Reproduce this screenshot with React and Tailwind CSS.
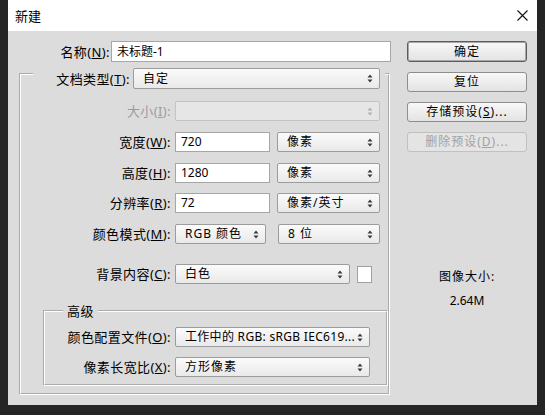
import React from 'react';

function Arrows({ disabled }) {
  return (
    <svg width="6" height="9" viewBox="0 0 6 9" className="shrink-0">
      <path d="M3 0.5L5.5 3.5H0.5Z M0.5 5.5H5.5L3 8.5Z" fill={disabled ? '#b0b0b0' : '#3a3a3a'} />
    </svg>
  );
}

function Select({ w, h = 'h-[20px]', disabled, track = 'tracking-[1px]', children }) {
  return (
    <div
      className={`${w} ${h} shrink-0 flex items-center justify-between pl-[9px] pr-[6px] rounded-[2px] border ${
        disabled
          ? 'border-[#c2c2c2] bg-[#e6e6e6] text-[#a0a0a0]'
          : 'border-[#9c9c9c] bg-linear-to-b from-[#fbfbfb] to-[#e9e9e9] text-black'
      }`}
    >
      <span className={`whitespace-nowrap leading-[16px] ${track}`}>{children}</span>
      <Arrows disabled={disabled} />
    </div>
  );
}

function Input({ w, h = 'h-[20px]', children }) {
  return (
    <div className={`${w} ${h} shrink-0 flex items-center pl-[5px] bg-white border border-[#a6a6a6] leading-[16px]`}>
      {children}
    </div>
  );
}

function Label({ w, disabled, children }) {
  return (
    <span
      className={`${w} shrink-0 text-right whitespace-nowrap text-[13px] leading-[16px] tracking-[0.4px] ${
        disabled ? 'text-[#9c9c9c]' : 'text-black'
      }`}
    >
      {children}
    </span>
  );
}

function Button({ h = 'h-[20px]', primary, disabled, children }) {
  let tone = 'border-[#8e8e8e] bg-linear-to-b from-[#f8f8f8] to-[#e3e3e3] text-black';
  if (primary) tone = 'border-[#5c5c5c] shadow-[inset_0_0_0_1px_#a8a8a8] bg-linear-to-b from-[#f8f8f8] to-[#e3e3e3] text-black';
  if (disabled) tone = 'border-[#c0c0c0] bg-[#e4e4e4] text-[#a2a2a2]';
  return (
    <div className={`w-[120px] ${h} flex items-center justify-center rounded-[3px] border tracking-[1px] leading-[16px] ${tone}`}>
      {children}
    </div>
  );
}

export default function App() {
  return (
    <div className="w-[545px] h-[415px] bg-[#252525] px-[8px] pb-[10px] flex flex-col text-[12px] leading-none [font-family:'Noto_Sans','Noto_Sans_CJK_SC',sans-serif]">
      {/* title bar */}
      <div className="h-[31px] shrink-0 bg-white flex items-center justify-between pl-[7px] pr-[9px]">
        <span className="text-[13px] leading-[16px] text-black">新建</span>
        <svg width="11" height="11" viewBox="0 0 11 11">
          <path d="M0.5 0.5L10.5 10.5M10.5 0.5L0.5 10.5" stroke="#111" strokeWidth="1.1" />
        </svg>
      </div>

      {/* body */}
      <div className="flex-1 bg-[#dcdcdc] flex">
        {/* left column */}
        <div className="w-[391px] flex flex-col">
          <div className="mt-[10px] h-[21px] flex items-center">
            <Label w="w-[102px]">名称(<u>N</u>):</Label>
            <div className="ml-[1px]">
              <Input w="w-[280px]" h="h-[21px]">未标题-1</Input>
            </div>
          </div>

          <fieldset className="mt-[6px] ml-[11px] w-[371px] border-2 border-white [border-style:groove] p-0 pb-[7px]">
            <legend className="ml-[12px] pr-[5px] h-[12px] p-0">
              <div className="h-[21px] flex items-center">
                <Label w="w-[97px]">文档类型(<u>T</u>):</Label>
                <div className="ml-[3px]">
                  <Select w="w-[247px]" h="h-[21px]">自定</Select>
                </div>
              </div>
            </legend>

            <div className="mt-[21px] h-[20px] flex items-center">
              <Label w="w-[150px]" disabled>大小(<u>I</u>):</Label>
              <div className="ml-[4px]">
                <Select w="w-[205px]" disabled>{''}</Select>
              </div>
            </div>

            <div className="mt-[11px] h-[20px] flex items-center">
              <Label w="w-[150px]">宽度(<u>W</u>):</Label>
              <div className="ml-[4px] flex gap-[7px]">
                <Input w="w-[95px]">720</Input>
                <Select w="w-[103px]">像素</Select>
              </div>
            </div>

            <div className="mt-[11px] h-[20px] flex items-center">
              <Label w="w-[150px]">高度(<u>H</u>):</Label>
              <div className="ml-[4px] flex gap-[7px]">
                <Input w="w-[95px]">1280</Input>
                <Select w="w-[103px]">像素</Select>
              </div>
            </div>

            <div className="mt-[10px] h-[20px] flex items-center">
              <Label w="w-[150px]">分辨率(<u>R</u>):</Label>
              <div className="ml-[4px] flex gap-[7px]">
                <Input w="w-[95px]">72</Input>
                <Select w="w-[103px]">像素/英寸</Select>
              </div>
            </div>

            <div className="mt-[11px] h-[20px] flex items-center">
              <Label w="w-[150px]">颜色模式(<u>M</u>):</Label>
              <div className="ml-[4px] flex gap-[12px]">
                <Select w="w-[91px]">RGB 颜色</Select>
                <Select w="w-[102px]">8 位</Select>
              </div>
            </div>

            <div className="mt-[20px] h-[20px] flex items-center">
              <Label w="w-[150px]">背景内容(<u>C</u>):</Label>
              <div className="ml-[4px] flex items-center gap-[7px]">
                <Select w="w-[175px]">白色</Select>
                <div className="w-[15px] h-[17px] bg-white border border-[#a0a0a0]" />
              </div>
            </div>

            <fieldset className="mt-[19px] ml-[22px] w-[345px] border-2 border-white [border-style:groove] p-0 pb-[7px]">
              <legend className="ml-[18px] px-[4px] h-[16px] flex items-center text-[13px] leading-[16px] tracking-[0.5px]">高级</legend>

              <div className="mt-[8px] h-[20px] flex items-center">
                <Label w="w-[126px]">颜色配置文件(<u>O</u>):</Label>
                <div className="ml-[4px]">
                  <Select w="w-[195px]" track="tracking-[0.3px]">工作中的 RGB: sRGB IEC619...</Select>
                </div>
              </div>

              <div className="mt-[10px] h-[20px] flex items-center">
                <Label w="w-[126px]">像素长宽比(<u>X</u>):</Label>
                <div className="ml-[4px]">
                  <Select w="w-[195px]">方形像素</Select>
                </div>
              </div>
            </fieldset>
          </fieldset>
        </div>

        {/* right column */}
        <div className="ml-[8px] w-[120px] flex flex-col">
          <div className="mt-[10px] flex flex-col gap-[10px]">
            <Button h="h-[21px]" primary>确定</Button>
            <Button>复位</Button>
            <Button>存储预设(<u>S</u>)...</Button>
            <Button disabled>删除预设(<u>D</u>)...</Button>
          </div>
          <div className="mt-[117px] flex flex-col items-center text-black leading-[16px]">
            <span className="tracking-[1px]">图像大小:</span>
            <span className="mt-[8px]">2.64M</span>
          </div>
        </div>
      </div>
    </div>
  );
}
